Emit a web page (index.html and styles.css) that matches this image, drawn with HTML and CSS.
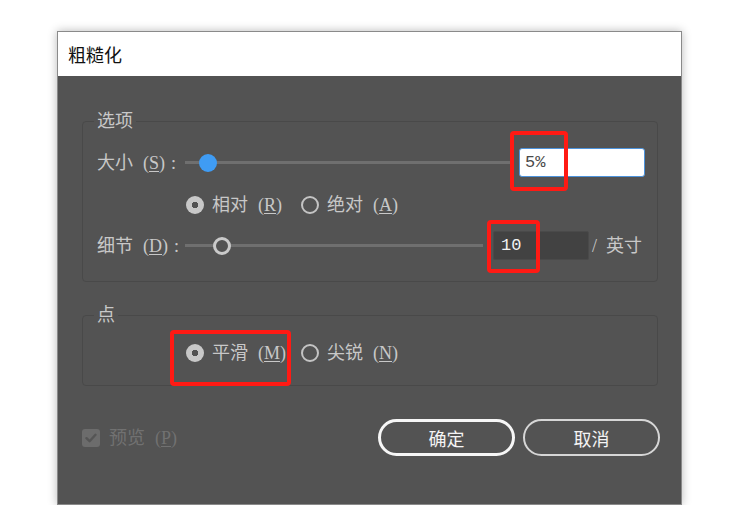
FILE: index.html
```html
<!DOCTYPE html>
<html lang="zh-CN">
<head>
<meta charset="utf-8">
<title>粗糙化</title>
<link rel="stylesheet" href="styles.css">
</head>
<body>
<div class="dialog">
  <div class="titlebar">粗糙化</div>
  <div class="content">
    <div class="group group-options">
      <div class="legend">选项</div>
      <div class="row row-size">
        <span class="label">大小<span class="key">(<u>S</u>)</span><span class="colon">:</span></span>
        <div class="slider slider-size"><span class="thumb thumb-blue"></span></div>
        <div class="input input-light">5%</div>
      </div>
      <div class="row row-radios">
        <span class="radio checked"><span class="dot"></span><span class="text">相对<span class="key">(<u>R</u>)</span></span></span>
        <span class="radio"><span class="dot"></span><span class="text">绝对<span class="key">(<u>A</u>)</span></span></span>
      </div>
      <div class="row row-detail">
        <span class="label">细节<span class="key">(<u>D</u>)</span><span class="colon">:</span></span>
        <div class="slider slider-detail"><span class="thumb thumb-hollow"></span></div>
        <div class="input input-dark">10</div>
        <span class="unit"><span class="slash">/</span>英寸</span>
      </div>
    </div>
    <div class="group group-points">
      <div class="legend">点</div>
      <div class="row row-radios">
        <span class="radio checked"><span class="dot"></span><span class="text">平滑<span class="key">(<u>M</u>)</span></span></span>
        <span class="radio"><span class="dot"></span><span class="text">尖锐<span class="key">(<u>N</u>)</span></span></span>
      </div>
    </div>
    <div class="footer">
      <span class="check">
        <span class="box"><svg width="12" height="10" viewBox="0 0 12 10"><path d="M1.5 5.2 L4.6 8.2 L10.5 1.8" fill="none" stroke="#555" stroke-width="2.4" stroke-linecap="round" stroke-linejoin="round"/></svg></span>
        <span class="text">预览<span class="key">(<u>P</u>)</span></span>
      </span>
      <div class="buttons">
        <button class="btn btn-primary">确定</button>
        <button class="btn">取消</button>
      </div>
    </div>
  </div>
  <div class="mark mark-size"></div>
  <div class="mark mark-detail"></div>
  <div class="mark mark-smooth"></div>
</div>
</body>
</html>
```
FILE: styles.css
```css
html, body {
  margin: 0;
  background: #ffffff;
}
body {
  font-family: "Liberation Serif", "Noto Sans CJK SC", serif;
  font-size: 18px;
  line-height: 20px;
}
.dialog {
  position: relative;
  margin: 31px 0 0 57px;
  width: 625px;
  height: 474px;
  box-sizing: border-box;
  border: 1px solid #8a8a8a;
  background: #535353;
  box-shadow: 0 0 9px rgba(0, 0, 0, 0.28);
  display: flex;
  flex-direction: column;
}
.titlebar {
  height: 44px;
  flex: none;
  background: #ffffff;
  padding-left: 10px;
  display: flex;
  align-items: center;
  font-family: "Noto Sans CJK SC", sans-serif;
  font-size: 18px;
  color: #111111;
}
.content {
  padding: 0 23px 0 24px;
  color: #c8c8c8;
}
.group {
  border: 1px solid #494949;
  border-radius: 4px;
  padding: 0 12px 0 14px;
}
.group-options {
  margin-top: 45px;
  padding-bottom: 21px;
}
.group-points {
  margin-top: 33px;
  padding-bottom: 22px;
}
.legend {
  width: fit-content;
  margin: -11px 0 0 -3px;
  padding: 0 3px;
  background: #535353;
  height: 20px;
}
.row {
  display: flex;
  align-items: center;
}
.row-size {
  margin-top: 17px;
  height: 29px;
}
.group-options .row-radios {
  margin-top: 18px;
  height: 20px;
  gap: 19px;
}
.group-points .row-radios {
  margin-top: 18px;
  height: 20px;
  gap: 15px;
}
.row-detail {
  margin-top: 16px;
  height: 29px;
}
.label {
  width: 88px;
  flex: none;
  white-space: nowrap;
}
.key {
  margin-left: 10px;
}
.colon {
  margin-left: 6px;
}
u {
  text-decoration-thickness: 1px;
  text-underline-offset: 2px;
}
.slider {
  position: relative;
  height: 18px;
  flex: none;
}
.slider::before {
  content: "";
  position: absolute;
  left: 0;
  right: 0;
  top: 7px;
  height: 3px;
  background: #6f6f6f;
}
.slider-size { width: 328px; }
.slider-detail { width: 298px; }
.thumb {
  position: absolute;
  top: 0;
  width: 18px;
  height: 18px;
  border-radius: 50%;
  box-sizing: border-box;
}
.thumb-blue {
  left: 14px;
  background: #3f9cf4;
}
.thumb-hollow {
  left: 28px;
  border: 3px solid #cacaca;
  background: #535353;
}
.input {
  box-sizing: border-box;
  height: 29px;
  flex: none;
  font-family: "Liberation Mono", monospace;
  font-size: 17px;
  display: flex;
  align-items: center;
}
.input-light {
  width: 126px;
  margin-left: 6px;
  background: #ffffff;
  border: 1px solid #4d93dc;
  border-radius: 3px;
  padding-left: 5px;
  color: #4a4a4a;
}
.input-dark {
  width: 96px;
  margin-left: 10px;
  background: #424242;
  border: 1px solid #4a4a4a;
  border-radius: 2px;
  padding-left: 7px;
  color: #f2f2f2;
}
.unit {
  margin-left: 3px;
  white-space: nowrap;
}
.slash {
  margin-right: 9px;
}
.row-radios {
  padding-left: 89px;
}
.radio {
  display: flex;
  align-items: center;
  gap: 8px;
  white-space: nowrap;
}
.text {
  white-space: nowrap;
}
.dot {
  width: 18px;
  height: 18px;
  border-radius: 50%;
  box-sizing: border-box;
  border: 2px solid #c4c4c4;
  flex: none;
}
.radio.checked .dot {
  border: none;
  background: radial-gradient(circle, #535353 0 3px, #c8c8c8 3.5px);
}
.footer {
  margin-top: 33px;
  margin-right: -2px;
  height: 37px;
  display: flex;
  align-items: center;
  justify-content: space-between;
}
.check {
  display: flex;
  align-items: center;
  gap: 9px;
  color: #717171;
  white-space: nowrap;
}
.box {
  width: 18px;
  height: 18px;
  border-radius: 3px;
  background: #6c6c6c;
  display: flex;
  align-items: center;
  justify-content: center;
}
.buttons {
  display: flex;
  gap: 8px;
}
.btn {
  width: 137px;
  height: 37px;
  box-sizing: border-box;
  border-radius: 19px;
  border: 2px solid #d6d6d6;
  background: transparent;
  color: #f4f4f4;
  font-family: "Noto Sans CJK SC", sans-serif;
  font-size: 18px;
  padding: 0;
}
.btn-primary {
  border: 3px solid #f6f6f6;
}
.mark {
  position: absolute;
  box-sizing: border-box;
  border: 4px solid #ff1a14;
  border-radius: 4px;
}
.mark-size {
  left: 452px;
  top: 99px;
  width: 58px;
  height: 60px;
}
.mark-detail {
  left: 429px;
  top: 188px;
  width: 53px;
  height: 53px;
}
.mark-smooth {
  left: 112px;
  top: 298px;
  width: 121px;
  height: 56px;
}
```
